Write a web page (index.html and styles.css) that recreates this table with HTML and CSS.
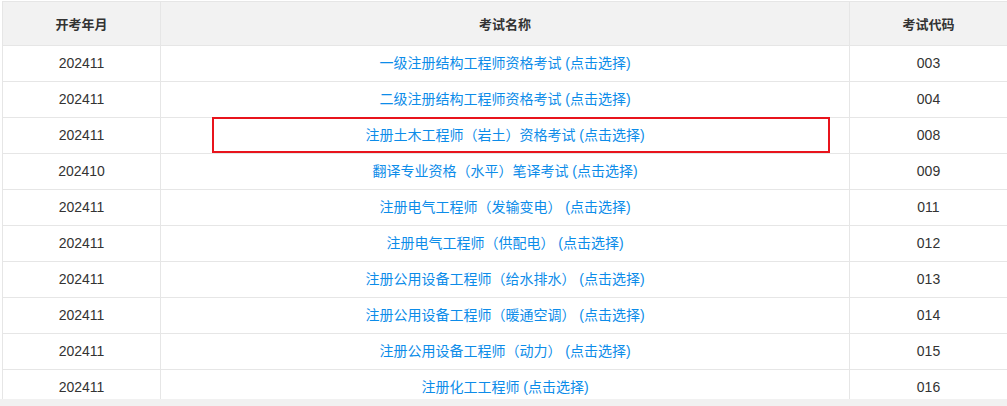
FILE: index.html
```html
<!DOCTYPE html>
<html lang="zh">
<head>
<meta charset="utf-8">
<link rel="stylesheet" href="styles.css">
</head>
<body>
<div class="viewport">
  <div class="scroll">
    <table class="exam-table">
      <colgroup>
        <col class="c1"><col class="c2"><col class="c3">
      </colgroup>
      <thead>
        <tr><th>开考年月</th><th>考试名称</th><th>考试代码</th></tr>
      </thead>
      <tbody>
        <tr><td>202411</td><td><a class="link">一级注册结构工程师资格考试 (点击选择)</a></td><td>003</td></tr>
        <tr><td>202411</td><td><a class="link">二级注册结构工程师资格考试 (点击选择)</a></td><td>004</td></tr>
        <tr><td>202411</td><td class="marked"><span class="highlight"></span><a class="link">注册土木工程师（岩土）资格考试 (点击选择)</a></td><td>008</td></tr>
        <tr><td>202410</td><td><a class="link">翻译专业资格（水平）笔译考试 (点击选择)</a></td><td>009</td></tr>
        <tr><td>202411</td><td><a class="link">注册电气工程师（发输变电） (点击选择)</a></td><td>011</td></tr>
        <tr><td>202411</td><td><a class="link">注册电气工程师（供配电） (点击选择)</a></td><td>012</td></tr>
        <tr><td>202411</td><td><a class="link">注册公用设备工程师（给水排水） (点击选择)</a></td><td>013</td></tr>
        <tr><td>202411</td><td><a class="link">注册公用设备工程师（暖通空调） (点击选择)</a></td><td>014</td></tr>
        <tr><td>202411</td><td><a class="link">注册公用设备工程师（动力） (点击选择)</a></td><td>015</td></tr>
        <tr><td>202411</td><td><a class="link">注册化工工程师 (点击选择)</a></td><td>016</td></tr>
      </tbody>
    </table>
  </div>
  <div class="hbar"></div>
</div>
</body>
</html>
```

FILE: styles.css
```css
html, body {
  margin: 0;
  padding: 0;
  background: #fff;
}
body {
  font-family: "Liberation Sans", Arial, "Noto Sans CJK SC", sans-serif;
  color: #333;
}
.viewport {
  width: 1007px;
  height: 406px;
  overflow: hidden;
  display: flex;
  flex-direction: column;
}
.scroll {
  height: 399px;
  overflow: hidden;
  padding: 1px 0 0 2px;
  box-sizing: border-box;
}
.hbar {
  height: 7px;
  background: #f1f1f1;
}
.exam-table {
  border-collapse: collapse;
  table-layout: fixed;
  width: 1005px;
}
.c1 { width: 158px; }
.c2 { width: 689px; }
.c3 { width: 158px; }
.exam-table th,
.exam-table td {
  border: 1px solid #e6e6e6;
  text-align: center;
  padding: 0;
}
.exam-table th {
  height: 43px;
  background: #f2f2f2;
  font-size: 13px;
  font-weight: bold;
  color: #333;
}
.exam-table td {
  height: 33px;
  font-size: 14px;
  line-height: 18px;
  padding-bottom: 2px;
  color: #333;
}
.link {
  color: #0c8ce9;
  cursor: pointer;
}
.marked {
  position: relative;
}
.highlight {
  position: absolute;
  left: 51px;
  right: 19px;
  top: -1px;
  bottom: 0;
  border: 2px solid #e8141c;
}
```
